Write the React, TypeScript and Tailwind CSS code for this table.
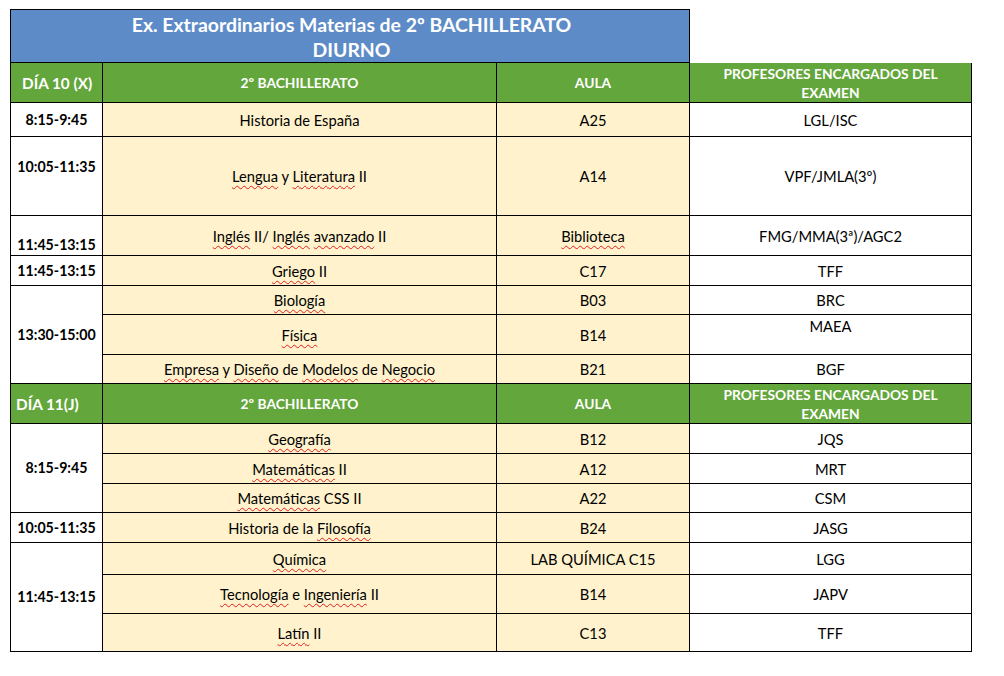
import React from "react";

const U = ({ children }: { children: React.ReactNode }) => (
  <span className="underline decoration-wavy decoration-[#e21d1d] decoration-1 underline-offset-[3px]">
    {children}
  </span>
);

const base = "border-r border-b border-black flex items-center justify-center text-center";
const timeCls = base + " border-l bg-white font-bold text-[14.2px] text-black";
const subjCls = base + " bg-[#fff2cc] text-[14.7px] text-black";
const profCls = base + " bg-white text-[14.7px] text-black";
const headCls = "border-r border-b border-black bg-[#63a63c] text-white font-bold text-[13.8px] flex items-center justify-center text-center leading-[19px]";

function Header({ day, pad }: { day: string; pad: string }) {
  return (
    <>
      <div className={"border-l border-r border-b border-black bg-[#63a63c] text-white font-bold text-[15.3px] flex items-center " + pad}>{day}</div>
      <div className={headCls}>2º BACHILLERATO</div>
      <div className={headCls}>AULA</div>
      <div className={headCls + " pt-[1px]"}>
        PROFESORES ENCARGADOS DEL
        <br />
        EXAMEN
      </div>
    </>
  );
}

export default function App() {
  return (
    <div className="w-[1004px] h-[676px] bg-white pl-[10px] pt-[9px] font-[Lato,'Liberation_Sans',sans-serif] leading-[18px]">
      <div className="grid grid-cols-[93px_394px_193px_282px] grid-rows-[54px_40px_34px_79px_40px_30px_29px_40px_29px_40px_30px_30px_29px_30px_32px_39px_38px]">
        <div className="col-span-3 border border-black bg-[#5d8bc7] text-white font-bold text-[19.4px] leading-[25px] flex flex-col items-center justify-center pl-[3px] pt-[1px]">
          <div>Ex. Extraordinarios Materias de 2º BACHILLERATO</div>
          <div>DIURNO</div>
        </div>
        <div />

        <Header day="DÍA 10 (X)" pad="pl-[11px]" />

        <div className={timeCls}>8:15-9:45</div>
        <div className={subjCls}>Historia de España</div>
        <div className={subjCls}>A25</div>
        <div className={profCls}>LGL/ISC</div>

        <div className={timeCls + " pb-[19px]"}>10:05-11:35</div>
        <div className={subjCls}>
          <span>
            <U>Lengua</U> y <U>Literatura</U> II
          </span>
        </div>
        <div className={subjCls}>A14</div>
        <div className={profCls}>VPF/JMLA(3º)</div>

        <div className={timeCls + " !items-end pb-[1px]"}>11:45-13:15</div>
        <div className={subjCls}>
          <span>
            <U>Inglés</U> II/ <U>Inglés</U> <U>avanzado</U> II
          </span>
        </div>
        <div className={subjCls}>
          <U>Biblioteca</U>
        </div>
        <div className={profCls}>FMG/MMA(3ª)/AGC2</div>

        <div className={timeCls}>11:45-13:15</div>
        <div className={subjCls}>
          <span>
            <U>Griego</U> II
          </span>
        </div>
        <div className={subjCls}>C17</div>
        <div className={profCls}>TFF</div>

        <div className={timeCls + " row-span-3"}>13:30-15:00</div>
        <div className={subjCls}>
          <U>Biología</U>
        </div>
        <div className={subjCls}>B03</div>
        <div className={profCls}>BRC</div>

        <div className={subjCls}>
          <U>Física</U>
        </div>
        <div className={subjCls}>B14</div>
        <div className={profCls + " !items-start pt-[2px]"}>MAEA</div>

        <div className={subjCls}>
          <span>
            <U>Empresa</U> y <U>Diseño</U> de <U>Modelos</U> de <U>Negocio</U>
          </span>
        </div>
        <div className={subjCls}>B21</div>
        <div className={profCls}>BGF</div>

        <Header day="DÍA 11(J)" pad="pl-[5px]" />

        <div className={timeCls + " row-span-3"}>8:15-9:45</div>
        <div className={subjCls}>
          <U>Geografía</U>
        </div>
        <div className={subjCls}>B12</div>
        <div className={profCls}>JQS</div>

        <div className={subjCls}>
          <span>
            <U>Matemáticas</U> II
          </span>
        </div>
        <div className={subjCls}>A12</div>
        <div className={profCls}>MRT</div>

        <div className={subjCls}>
          <span>
            <U>Matemáticas</U> CSS II
          </span>
        </div>
        <div className={subjCls}>A22</div>
        <div className={profCls}>CSM</div>

        <div className={timeCls}>10:05-11:35</div>
        <div className={subjCls}>
          <span>
            Historia de la <U>Filosofía</U>
          </span>
        </div>
        <div className={subjCls}>B24</div>
        <div className={profCls}>JASG</div>

        <div className={timeCls + " row-span-3"}>11:45-13:15</div>
        <div className={subjCls}>
          <U>Química</U>
        </div>
        <div className={subjCls}>LAB QUÍMICA C15</div>
        <div className={profCls}>LGG</div>

        <div className={subjCls}>
          <span>
            <U>Tecnología</U> e <U>Ingeniería</U> II
          </span>
        </div>
        <div className={subjCls}>B14</div>
        <div className={profCls}>JAPV</div>

        <div className={subjCls}>
          <span>
            <U>Latín</U> II
          </span>
        </div>
        <div className={subjCls}>C13</div>
        <div className={profCls}>TFF</div>
      </div>
    </div>
  );
}
